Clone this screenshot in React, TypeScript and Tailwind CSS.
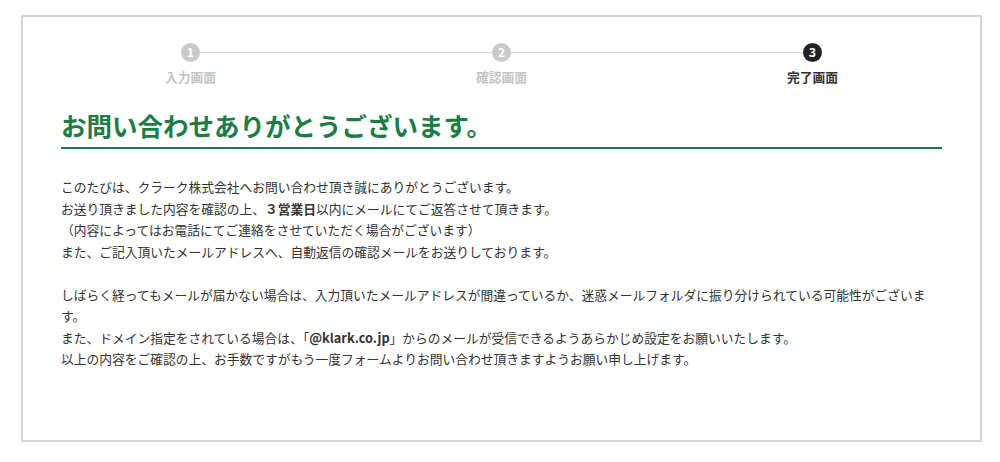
import React from "react";

const steps = [
  { n: "1", label: "入力画面", active: false },
  { n: "2", label: "確認画面", active: false },
  { n: "3", label: "完了画面", active: true },
];

export default function App() {
  return (
    <div
      className="w-[1000px] h-[462px] bg-white pt-[15px] pl-[21px]"
      style={{ fontFamily: '"Noto Sans CJK JP", "Noto Sans", sans-serif' }}
    >
      <div className="w-[961px] h-[427px] border-2 border-[#d5d5d5] pt-[26px]">
        <div className="relative flex justify-center">
          <div className="absolute top-[9px] left-[168px] right-[166px] h-px bg-[#d4d4d4]" />
          {steps.map((s) => (
            <div key={s.n} className="relative w-[311px] flex flex-col items-center">
              <div
                className={
                  "w-[19px] h-[19px] rounded-full flex items-center justify-center text-white text-[12.5px] font-bold leading-none " +
                  (s.active ? "bg-[#222222]" : "bg-[#c9c9c9]")
                }
              >
                {s.n}
              </div>
              <div
                className={
                  "mt-[6px] text-[12.75px] leading-[17px] font-bold " +
                  (s.active ? "text-[#333333]" : "text-[#c4c4c4]")
                }
              >
                {s.label}
              </div>
            </div>
          ))}
        </div>

        <div className="px-[38px]">
          <h1 className="mt-[22px] text-[25.5px] leading-[36px] font-bold text-[#1a7d45] border-b-2 border-[#1a7d45] pb-[4px]">
            お問い合わせありがとうございます。
          </h1>
          <div className="mt-[27px] text-[12.75px] leading-[21.5px] text-[#333333]">
            <p>このたびは、クラーク株式会社へお問い合わせ頂き誠にありがとうございます。</p>
            <p>
              お送り頂きました内容を確認の上、<b>３営業日</b>以内にメールにてご返答させて頂きます。
            </p>
            <p>（内容によってはお電話にてご連絡をさせていただく場合がございます）</p>
            <p>また、ご記入頂いたメールアドレスへ、自動返信の確認メールをお送りしております。</p>
            <p>&nbsp;</p>
            <p>
              しばらく経ってもメールが届かない場合は、入力頂いたメールアドレスが間違っているか、迷惑メールフォルダに振り分けられている可能性がございます。
            </p>
            <p>
              また、ドメイン指定をされている場合は、「<b>@klark.co.jp</b>」からのメールが受信できるようあらかじめ設定をお願いいたします。
            </p>
            <p>以上の内容をご確認の上、お手数ですがもう一度フォームよりお問い合わせ頂きますようお願い申し上げます。</p>
          </div>
        </div>
      </div>
    </div>
  );
}
